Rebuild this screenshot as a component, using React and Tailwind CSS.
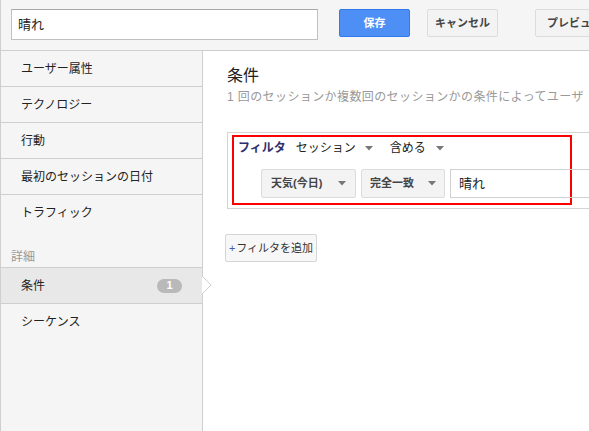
import React from "react";

const font = { fontFamily: '"Liberation Sans", "Noto Sans CJK JP", sans-serif' };

const navItems = ["ユーザー属性", "テクノロジー", "行動", "最初のセッションの日付", "トラフィック"];

function Caret() {
  return (
    <svg width="8" height="5" viewBox="0 0 8 5" className="shrink-0">
      <path d="M0 0 L8 0 L4 4.5 Z" fill="#777" />
    </svg>
  );
}

function GrayButton({ children, className = "" }) {
  return (
    <button
      type="button"
      className={`flex shrink-0 items-center whitespace-nowrap rounded-[2px] border border-[#dcdcdc] bg-[#f3f3f3] text-[11px] font-bold text-[#444] ${className}`}
    >
      {children}
    </button>
  );
}

export default function App() {
  return (
    <div
      className="flex h-[431px] w-[589px] flex-col overflow-hidden border-l border-[#cfcfcf] bg-white text-[#222]"
      style={font}
    >
      {/* top bar */}
      <header className="flex h-[51px] shrink-0 items-start overflow-hidden border-b border-[#cfcfcf] bg-[#f5f5f5] pl-[10px] pt-[9px]">
        <div className="flex h-[31px] w-[307px] shrink-0 items-center border border-[#c0c0c0] border-t-[#a8a8a8] bg-white px-[6px] text-[13px] text-[#222]">
          晴れ
        </div>
        <button
          type="button"
          className="ml-[21px] flex h-[28px] w-[71px] shrink-0 items-center justify-center rounded-[2px] border border-[#3079ed] bg-[#4d8ff5] text-[11px] font-bold text-white"
        >
          保存
        </button>
        <GrayButton className="ml-[17px] h-[28px] w-[71px] justify-center">キャンセル</GrayButton>
        <GrayButton className="ml-[37px] h-[28px] w-[80px] justify-start pl-[11px]">プレビュー</GrayButton>
      </header>

      <div className="flex min-h-0 flex-1">
        {/* sidebar */}
        <aside className="relative flex w-[202px] shrink-0 flex-col border-r border-[#cfcfcf] bg-[#f5f5f5] text-[12px] leading-none text-[#222]">
          {navItems.map((item, i) => (
            <div
              key={item}
              className={`flex h-[36px] items-center pl-[20px] ${i < navItems.length - 1 ? "border-b border-[#cfcfcf]" : ""}`}
            >
              {item}
            </div>
          ))}
          <div className="flex h-[36px] items-end pb-[4px] pl-[10px] text-[12px] text-[#999]">詳細</div>
          <div className="relative flex h-[37px] items-center border-y border-[#cfcfcf] bg-[#e8e8e8] pl-[20px]">
            条件
            <span className="ml-auto mr-[20px] flex h-[14px] w-[25px] items-center justify-center rounded-full bg-[#b9b9b9] text-[11px] font-bold text-white">
              1
            </span>
            <svg width="10" height="18" viewBox="0 0 10 18" className="absolute right-[-10px] top-[8px]">
              <path d="M0 0 L9 9 L0 18 Z" fill="#fff" />
              <path d="M0 0 L9 9 L0 18" fill="none" stroke="#cfcfcf" strokeWidth="1" />
            </svg>
          </div>
          <div className="flex h-[36px] items-center pl-[20px]">シーケンス</div>
        </aside>

        {/* main */}
        <main className="min-w-0 flex-1 overflow-hidden bg-white pl-[24px] pt-[15px]">
          <h1 className="text-[16px] leading-[20px] text-[#222]">条件</h1>
          <p className="mt-[4px] whitespace-nowrap text-[12px] leading-[14px] tracking-[0.4px] text-[#999]">
            1 回のセッションか複数回のセッションかの条件によってユーザ
          </p>

          <div className="mt-[28px] w-[420px] border border-[#d4d4d4] pb-[3px] pl-[4px] pt-[2px]">
            <div className="h-[70px] w-[340px] border-2 border-[#ff0000] pl-[4px] pt-[1px]">
              <div className="flex h-[20px] items-center whitespace-nowrap text-[12px] leading-none">
                <span className="font-bold text-[#2f2f6e]">フィルタ</span>
                <span className="ml-[10px] text-[#222]">セッション</span>
                <span className="ml-[9px]">
                  <Caret />
                </span>
                <span className="ml-[17px] text-[#222]">含める</span>
                <span className="ml-[10px]">
                  <Caret />
                </span>
              </div>
              <div className="mt-[11px] flex items-center pl-[23px]">
                <GrayButton className="h-[29px] w-[95px] justify-between px-[9px]">
                  <span>天気(今日)</span>
                  <Caret />
                </GrayButton>
                <GrayButton className="ml-[5px] h-[29px] w-[84px] justify-between px-[8px]">
                  <span>完全一致</span>
                  <Caret />
                </GrayButton>
                <div className="ml-[5px] flex h-[29px] w-[160px] shrink-0 items-center border border-[#d0d0d0] pl-[8px] text-[13px] text-[#222]">
                  晴れ
                </div>
              </div>
            </div>
          </div>

          <button
            type="button"
            className="ml-[-2px] mt-[25px] flex h-[28px] w-[92px] items-center justify-center whitespace-nowrap rounded-[2px] border border-[#d6d6d6] bg-[#f7f7f7] text-[11px] text-[#333]"
          >
            <span className="mr-[1px] text-[#4a5aa8]">+</span>フィルタを追加
          </button>
        </main>
      </div>
    </div>
  );
}
